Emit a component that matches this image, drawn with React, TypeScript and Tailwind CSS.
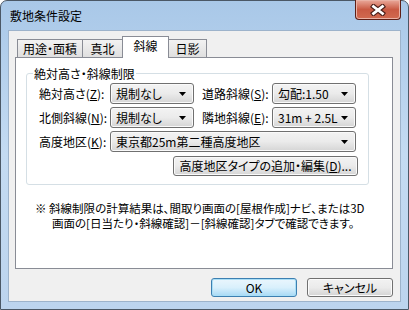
const FONT = "font-['Noto_Sans_CJK_JP',sans-serif] [font-feature-settings:'palt']"

function Combo({ value, className }: { value: string; className: string }) {
  return (
    <div
      className={`flex h-[21px] items-center justify-between rounded-[3px] border border-[#707070] bg-linear-to-b from-[#f3f3f3] via-[#ebebeb] to-[#d5d5d5] pr-[7px] pl-[5px] shadow-[inset_0_0_0_1px_#fafafa] ${className}`}
    >
      <span className="leading-none">{value}</span>
      <svg width="7" height="4" viewBox="0 0 7 4">
        <path d="M0 0h7L3.5 4z" fill="#000" />
      </svg>
    </div>
  )
}

function Tab({ label, active, className }: { label: string; active?: boolean; className: string }) {
  return (
    <div
      className={`flex items-center justify-center border border-b-0 border-[#898c95] ${
        active ? 'relative z-10 h-[22px] bg-white pb-[3px]' : 'h-[19px] bg-linear-to-b from-[#f2f2f2] to-[#dedede]'
      } ${className}`}
    >
      <span className="leading-none">{label}</span>
    </div>
  )
}

function Button({ children, primary }: { children: React.ReactNode; primary?: boolean }) {
  return (
    <div
      className={`flex h-[19px] w-[86px] items-center justify-center rounded-[3px] border bg-linear-to-b leading-none ${
        primary
          ? 'border-[#3c7fb1] from-[#eaf6fd] via-[#d9f0fc] to-[#a7d9f5] shadow-[inset_0_0_0_1px_#a9def6]'
          : 'border-[#707070] from-[#f2f2f2] via-[#ebebeb] to-[#d3d3d3] shadow-[inset_0_0_0_1px_#fbfbfb]'
      }`}
    >
      {children}
    </div>
  )
}

export default function App() {
  return (
    <div
      className={`flex h-[310px] w-[409px] flex-col rounded-t-[7px] border border-[#4b5866] bg-linear-to-b from-[#a9c8e8] via-[#c4dbf2] to-[#bcd4ee] px-[7px] pb-[7px] text-[12px] text-black ${FONT}`}
    >
      {/* title bar */}
      <div className="flex h-[29px] items-start justify-between">
        <span className="pt-[7px] pl-[2px] text-[12px] leading-[16px]">敷地条件設定</span>
        <div className="-mt-[1px] flex h-[20px] w-[46px] items-center justify-center rounded-b-[4px] border border-t-0 border-[#5e1f16] bg-linear-to-b from-[#e9a99b] via-[#c95a43] to-[#d16a50] shadow-[inset_0_0_0_1px_#eab2a5]">
          <svg width="16" height="12" viewBox="0 0 16 12">
            <path d="M3.5 2.5l9 7M12.5 2.5l-9 7" stroke="#4a1e18" strokeWidth="5" strokeLinecap="square" />
            <path d="M3.5 2.5l9 7M12.5 2.5l-9 7" stroke="#fff" strokeWidth="2.8" strokeLinecap="square" />
          </svg>
        </div>
      </div>

      {/* client area */}
      <div className="flex flex-1 flex-col border border-[#9db3cb] bg-[#f0f0f0] pr-[7px] pl-[6px]">
        {/* tabs */}
        <div className="flex items-end pt-[5px] pl-[2px]">
          <Tab label="用途・面積" className="w-[66px]" />
          <Tab label="真北" className="-ml-[1px] w-[41px]" />
          <Tab label="斜線" active className="-ml-[1px] w-[47px]" />
          <Tab label="日影" className="-ml-[1px] w-[39px]" />
        </div>

        {/* panel */}
        <div className="-mt-[1px] flex h-[212px] w-[378px] flex-col border border-[#898c95] bg-white pt-[15px] pl-[10px]">
          <div className="relative h-[112px] w-[343px] rounded-[3px] border border-[#d5dfe5] pt-[9px] pl-[12px]">
            <span className="absolute -top-[8px] left-[6px] bg-white px-[1px] leading-[15px]">絶対高さ・斜線制限</span>

            <div className="flex flex-col gap-[3px]">
              <div className="flex items-center">
                <span className="w-[71px] leading-none">
                  絶対高さ(<span className="underline">Z</span>):
                </span>
                <Combo value="規制なし" className="w-[84px]" />
                <span className="ml-[8px] w-[70px] leading-none">
                  道路斜線(<span className="underline">S</span>):
                </span>
                <Combo value="勾配:1.50" className="w-[84px]" />
              </div>
              <div className="flex items-center">
                <span className="w-[71px] leading-none">
                  北側斜線(<span className="underline">N</span>):
                </span>
                <Combo value="規制なし" className="w-[84px]" />
                <span className="ml-[8px] w-[70px] leading-none">
                  隣地斜線(<span className="underline">E</span>):
                </span>
                <Combo value="31m + 2.5L" className="w-[84px]" />
              </div>
              <div className="flex items-center">
                <span className="w-[71px] leading-none">
                  高度地区(<span className="underline">K</span>):
                </span>
                <Combo value="東京都25m第二種高度地区" className="w-[246px]" />
              </div>
              <div className="flex pt-[1px] pl-[134px]">
                <div className="flex h-[20px] w-[185px] items-center justify-center rounded-[3px] border border-[#707070] bg-linear-to-b from-[#f3f3f3] via-[#ebebeb] to-[#d5d5d5] leading-none shadow-[inset_0_0_0_1px_#fafafa]">
                  高度地区タイプの追加・編集(<span className="underline">D</span>)...
                </div>
              </div>
            </div>
          </div>

          <div className="mt-[16px] pl-[9px] text-[11.5px] leading-[15px]">
            <p>※ 斜線制限の計算結果は、間取り画面の[屋根作成]ナビ、または3D</p>
            <p className="pl-[17px]">画面の[日当たり・斜線確認]－[斜線確認]タブで確認できます。</p>
          </div>
        </div>

        {/* buttons */}
        <div className="flex justify-end gap-[10px] pt-[9px]">
          <Button primary>OK</Button>
          <Button>キャンセル</Button>
        </div>
      </div>
    </div>
  )
}
